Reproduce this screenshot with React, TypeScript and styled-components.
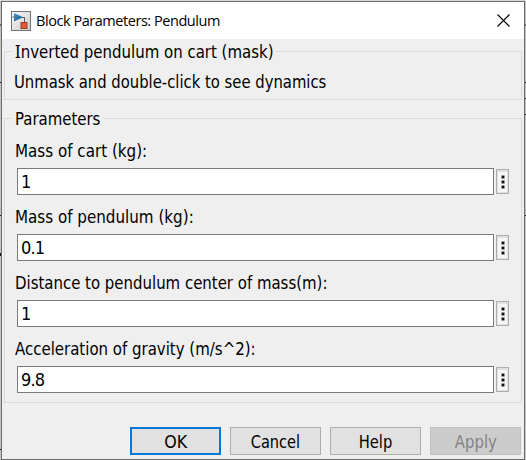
import React from 'react';
import styled, { createGlobalStyle } from 'styled-components';

const Global = createGlobalStyle`
  * { box-sizing: border-box; }
  body { margin: 0; overflow: hidden; }
`;

const Canvas = styled.div`
  width: 526px;
  height: 460px;
  padding: 1px 1px 0;
  background:
    linear-gradient(#666, #666) 0 24px / 526px 2px no-repeat,
    linear-gradient(#111, #111) 0 82px / 526px 1px no-repeat,
    linear-gradient(#111, #111) 100% 98px / 1px 1px no-repeat,
    linear-gradient(#111, #111) 100% 114px / 1px 1px no-repeat,
    linear-gradient(#111, #111) 0 215px / 526px 1px no-repeat,
    linear-gradient(#111, #111) 0 253px / 1px 3px no-repeat,
    linear-gradient(#111, #111) 0 449px / 1px 1px no-repeat,
    linear-gradient(#d9d9d9, #d9d9d9) 0 0 / 526px 1px no-repeat,
    #c4c4c4;
`;

const Dialog = styled.div`
  display: flex;
  flex-direction: column;
  width: 524px;
  height: 459px;
  border: 1px solid #6b6b6b;
  background: #efefef;
  color: #000;
  font: 18px/22px 'DejaVu Sans Condensed', 'DejaVu Sans', sans-serif;
  font-stretch: condensed;
`;

const TitleBar = styled.header`
  display: flex;
  align-items: center;
  flex: none;
  height: 37px;
  padding: 0 14px 0 9px;
  background: #fff;
`;

const Title = styled.h1`
  flex: 1;
  margin: 0 0 0 5px;
  font: 400 14.5px/20px 'Open Sans', sans-serif;
  letter-spacing: -0.45px;
  padding-top: 1px;
`;

const Group = styled.section<{ $height: number; $gap: number }>`
  flex: none;
  width: 518px;
  height: ${(p) => p.$height}px;
  margin: ${(p) => p.$gap}px 0 0 2px;
  border: 1px solid #dadada;
  padding: 0 12px 0 9px;
`;

const Legend = styled.h2<{ $width: number }>`
  width: ${(p) => p.$width}px;
  height: 22px;
  margin: -11px 0 0 -2px;
  padding-left: 3px;
  background: #efefef;
  font: inherit;
`;

const Text = styled.span<{ $scale?: number; $centered?: boolean }>`
  display: block;
  width: max-content;
  white-space: nowrap;
  transform: scaleX(${(p) => p.$scale ?? 0.922});
  transform-origin: ${(p) => (p.$centered ? 'center' : 'left')};
`;

const Glyph = styled.span`
  font-family: 'Noto Sans', sans-serif;
  line-height: 0;
`;

const Description = styled.div`
  padding-top: 8px;
`;

const Field = styled.label`
  display: block;
  height: 66px;
  padding: 10px 0 0 1px;
`;

const InputRow = styled.div`
  display: flex;
  align-items: center;
  gap: 2px;
  margin: 6px 0 0 2px;
`;

const Input = styled.input`
  width: 477px;
  height: 27px;
  padding: 0 3px 1px;
  border: 1px solid #7a7a7a;
  border-radius: 0;
  background: #fff;
  outline: 0;
  font: inherit;
  letter-spacing: -0.9px;
`;

const MoreButton = styled.button`
  width: 13px;
  height: 25px;
  padding: 0;
  border: 1px solid #adadad;
  background: #f6f6f6;
  box-shadow: inset 0 2px #e1e1e1, inset 0 0 0 1px #e1e1e1;
  svg { display: block; }
`;

const Footer = styled.footer`
  display: flex;
  justify-content: flex-end;
  gap: 9px;
  margin-top: 24px;
  padding-right: 3px;
`;

const Button = styled.button<{ $primary?: boolean }>`
  width: 91px;
  height: 28px;
  padding: 1px 0 0;
  display: flex;
  align-items: center;
  justify-content: center;
  border: ${(p) => (p.$primary ? '2px solid #0078d7' : '1px solid #adadad')};
  background: #e1e1e1;
  color: #000;
  font: inherit;
  &:disabled { background: #ccc; border-color: #bfbfbf; color: #838383; }
`;

const fields = [
  { label: 'Mass of cart (kg):', value: '1', scale: 0.935 },
  { label: 'Mass of pendulum (kg):', value: '0.1', scale: 0.935 },
  { label: 'Distance to pendulum center of mass(m):', value: '1', scale: 0.923 },
  { label: 'Acceleration of gravity (m/s^2):', value: '9.8', scale: 0.925 },
];

const SimulinkIcon = () => (
  <svg width="20" height="20" viewBox="0 0 20 20">
    <defs>
      <linearGradient id="frame" x2="1" y2="1">
        <stop stopColor="#fafafa" />
        <stop offset="1" stopColor="#c9cbcc" />
      </linearGradient>
      <linearGradient id="gain" x2="1" y2="1">
        <stop stopColor="#4d9ccb" />
        <stop offset="1" stopColor="#0b4f86" />
      </linearGradient>
    </defs>
    <rect x=".5" y=".5" width="19" height="19" fill="url(#frame)" stroke="#6f7276" />
    <path d="M1.5 6H3M11 6.5H13.5V11" fill="none" stroke="#555" />
    <path d="M3 2L12 6.3L3 10.5Z" fill="url(#gain)" />
    <rect x="10" y="11.5" width="6" height="6" fill="#df5937" stroke="#9f3c24" />
  </svg>
);

const CloseIcon = () => (
  <svg width="13" height="13" viewBox="0 0 13 13">
    <path d="M.5 .5L12.5 12.5M12.5 .5L.5 12.5" stroke="#000" strokeWidth="1.1" />
  </svg>
);

const DotsIcon = () => (
  <svg width="11" height="23" viewBox="0 0 11 23">
    <path d="M4 5h4v4h-4zM4 10h4v4h-4zM4 15h4v4h-4z" fill="#bdbdbd" />
    <path d="M5 6h2v2h-2zM5 11h2v2h-2zM5 16h2v2h-2z" fill="#111" stroke="#111" strokeWidth=".5" />
  </svg>
);

export default function App() {
  return (
    <>
      <Global />
      <Canvas>
        <Dialog>
          <TitleBar>
            <SimulinkIcon />
            <Title>Block Parameters: Pendulum</Title>
            <CloseIcon />
          </TitleBar>
          <Group $height={49} $gap={12}>
            <Legend $width={264}><Text $scale={0.925}><Glyph>I</Glyph>nverted pendulum on cart (mask)</Text></Legend>
            <Description><Text $scale={0.915}>Unmask and double-click to see dynamics</Text></Description>
          </Group>
          <Group $height={285} $gap={18}>
            <Legend $width={91}><Text>Parameters</Text></Legend>
            {fields.map((f) => (
              <Field key={f.label}>
                <Text $scale={f.scale}>{f.label}</Text>
                <InputRow>
                  <Input defaultValue={f.value} />
                  <MoreButton><DotsIcon /></MoreButton>
                </InputRow>
              </Field>
            ))}
          </Group>
          <Footer>
            <Button $primary><Text $centered $scale={0.98}>OK</Text></Button>
            <Button><Text $centered $scale={0.9}>Cancel</Text></Button>
            <Button><Text $centered $scale={0.91}>Help</Text></Button>
            <Button disabled><Text $centered>Apply</Text></Button>
          </Footer>
        </Dialog>
      </Canvas>
    </>
  );
}
